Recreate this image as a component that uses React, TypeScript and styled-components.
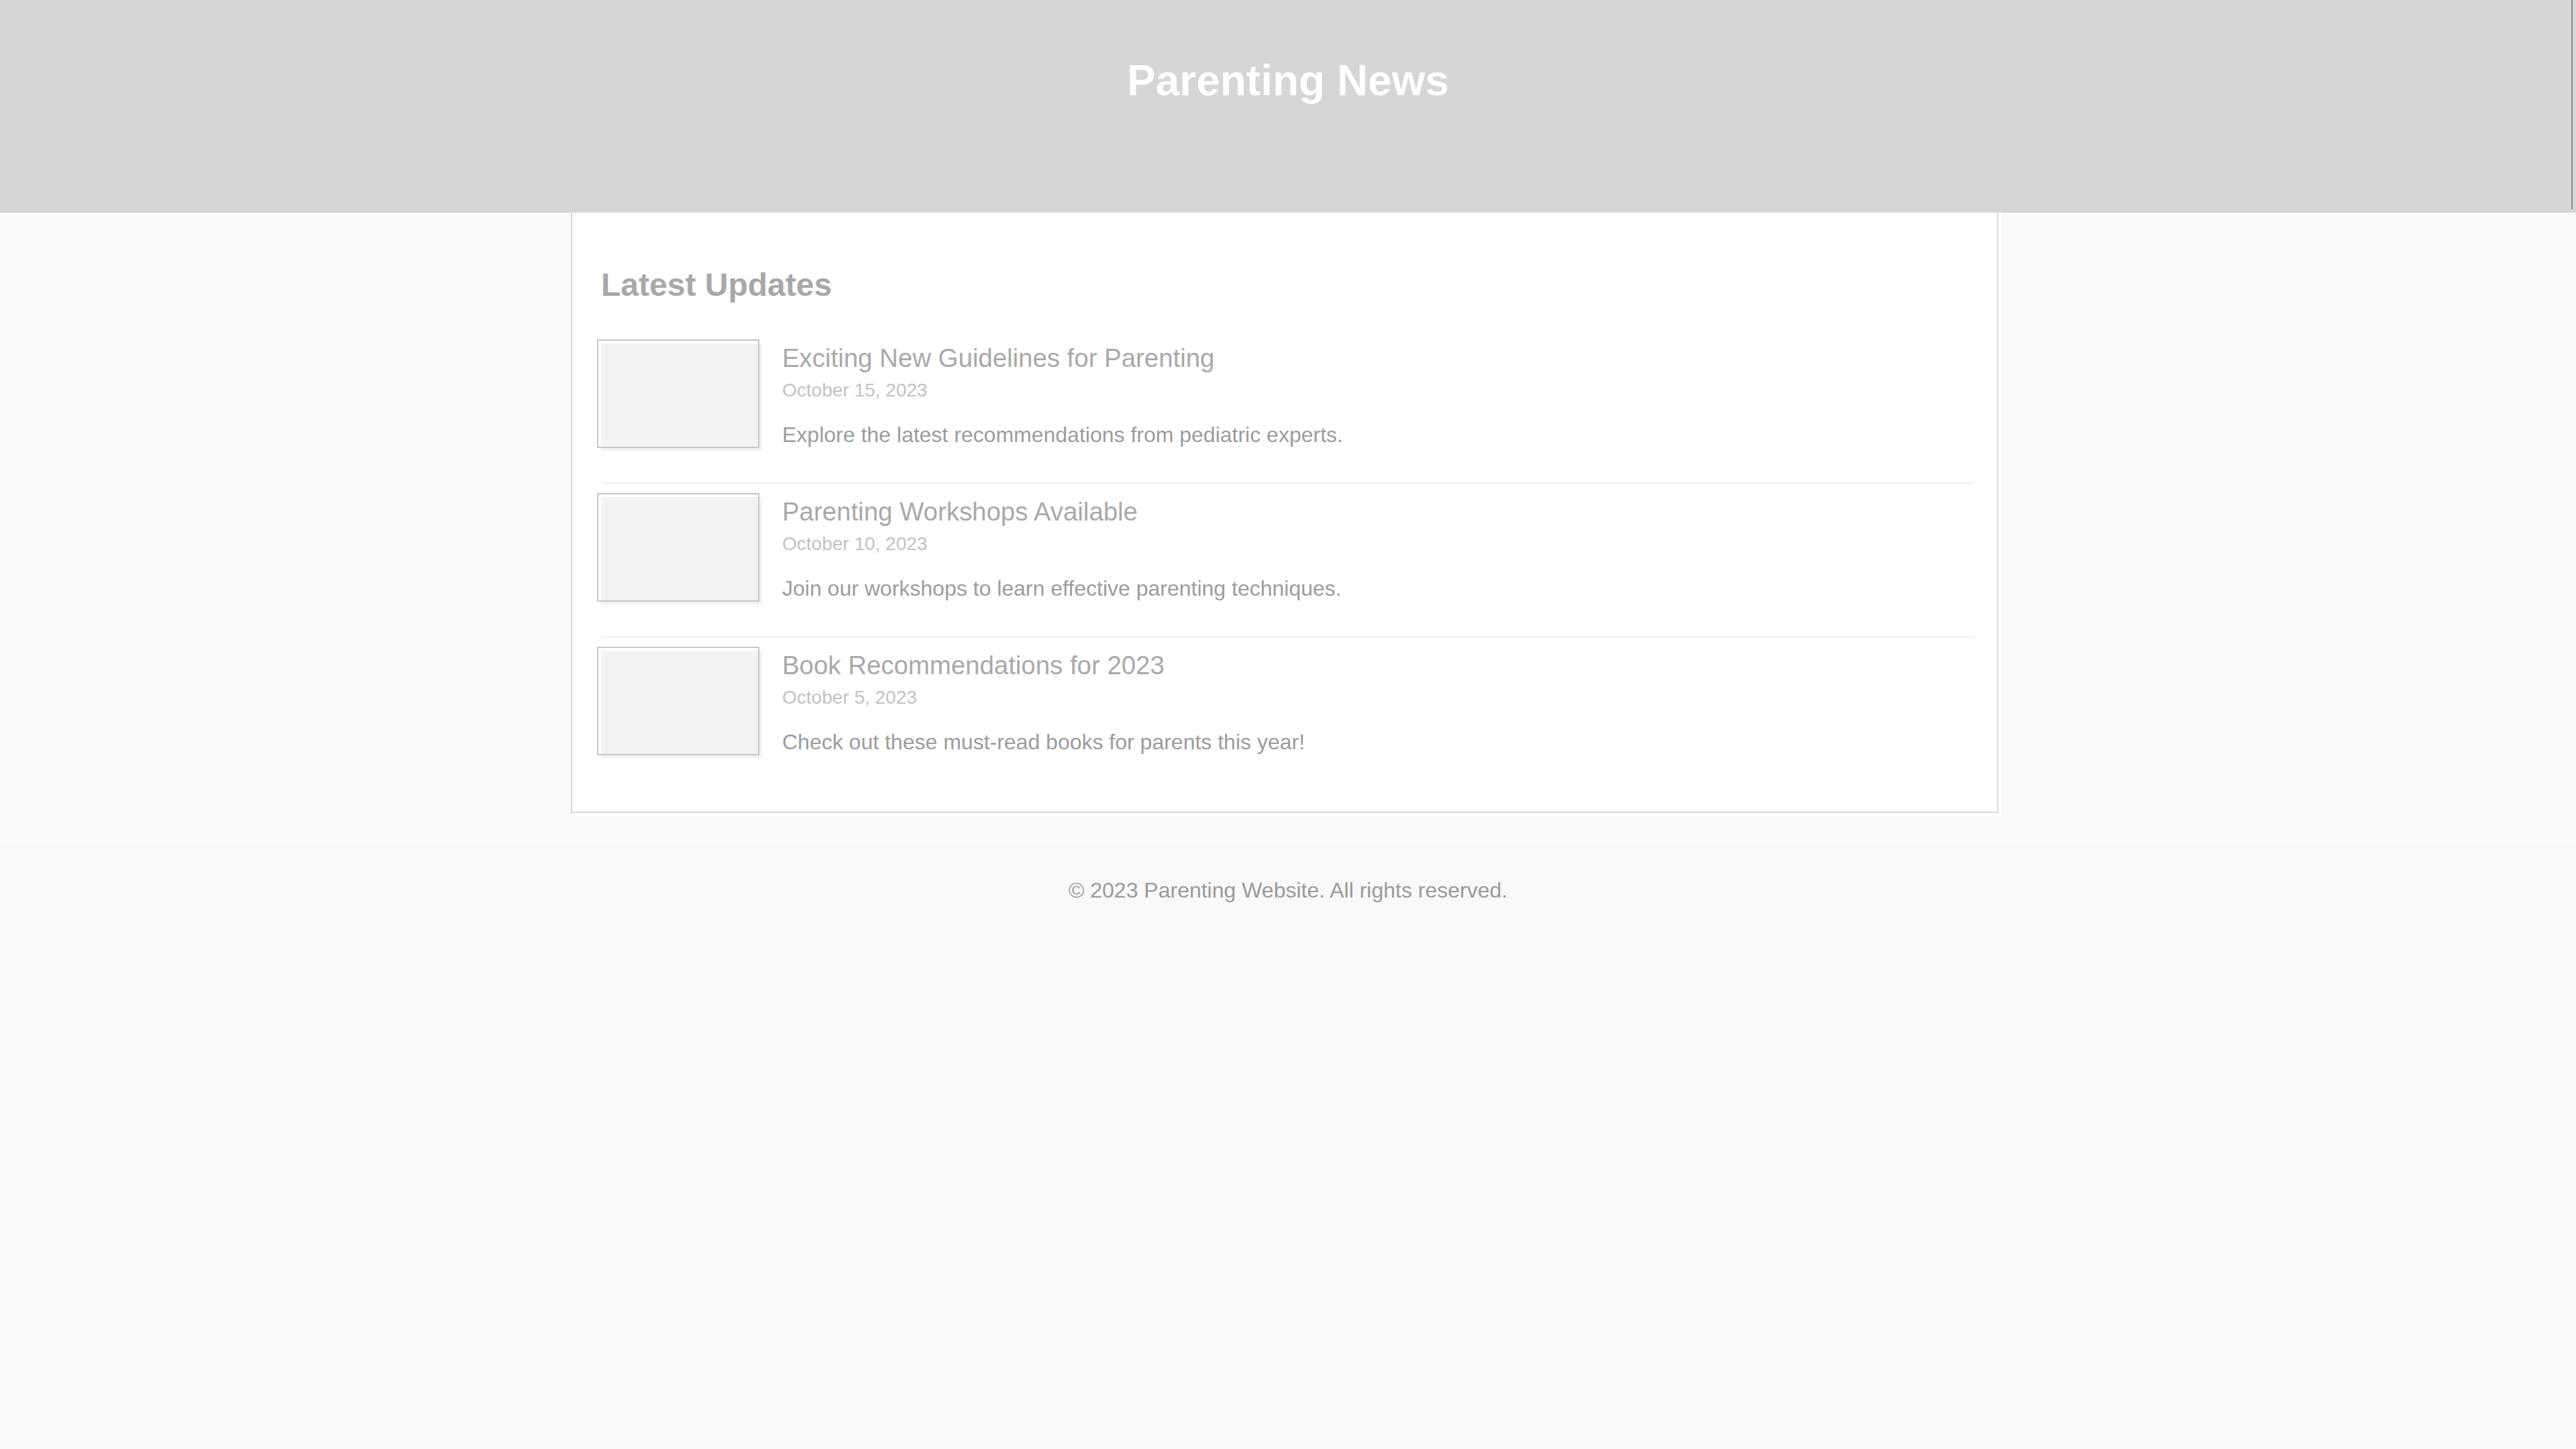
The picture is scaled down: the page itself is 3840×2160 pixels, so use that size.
import React from "react";
import styled, { createGlobalStyle } from "styled-components";

const GlobalStyle = createGlobalStyle`
  html, body {
    margin: 0;
    padding: 0;
    background: #fafafa;
  }
  body {
    font-family: "Liberation Sans", Arial, sans-serif;
  }
`;

const Header = styled.header`
  position: relative;
  box-sizing: border-box;
  height: 317px;
  padding-top: 83px;
  background: #d6d6d6;
  text-align: center;

  &::after {
    content: "";
    position: absolute;
    top: 0;
    right: 5px;
    width: 2px;
    height: 312px;
    background: #8c8c8c;
  }
`;

const SiteTitle = styled.h1`
  margin: 0;
  font-size: 64px;
  font-weight: 700;
  line-height: normal;
  color: #ffffff;
  text-shadow: 0 0 1px rgba(0, 0, 0, 0.12);
`;

const Main = styled.main`
  display: block;
`;

const Panel = styled.section`
  position: relative;
  box-sizing: border-box;
  width: 2128px;
  margin: 0 auto;
  padding: 40px 40px 40px;
  background: #ffffff;

  &::after {
    content: "";
    position: absolute;
    left: -5px;
    top: -5px;
    width: 100%;
    height: 100%;
    box-sizing: border-box;
    border: 2px solid #d9d9d9;
    border-top: none;
    pointer-events: none;
  }
`;

const SectionTitle = styled.h2`
  margin: 40px 0;
  font-size: 48px;
  font-weight: 700;
  line-height: normal;
  color: #a8a8a8;
`;

const List = styled.div`
  display: flex;
  flex-direction: column;
`;

const Item = styled.article`
  display: flex;
  align-items: flex-start;
  gap: 30px;
  padding: 20px 0;
  border-bottom: 2px solid #eeeeee;

  &:last-child {
    border-bottom: none;
  }
`;

const Thumb = styled.div`
  position: relative;
  flex: 0 0 240px;
  height: 160px;
  background: #f3f3f3;

  &::after {
    content: "";
    position: absolute;
    left: -6px;
    top: -6px;
    width: 242px;
    height: 162px;
    box-sizing: border-box;
    border: 2px solid #c6c6c6;
    pointer-events: none;
  }
`;

const ItemBody = styled.div`
  display: flex;
  flex-direction: column;
  min-width: 0;
`;

const ItemTitle = styled.h3`
  margin: 0;
  font-size: 38.4px;
  font-weight: 400;
  line-height: normal;
  color: #a9a9a9;
`;

const ItemDate = styled.div`
  margin-top: 10px;
  font-size: 28px;
  line-height: normal;
  color: #c2c2c2;
`;

const ItemText = styled.p`
  margin: 32px 0;
  font-size: 32px;
  line-height: normal;
  color: #9c9c9c;
`;

const Footer = styled.footer`
  margin-top: 40px;
  padding: 20px;
  background: #f9f9f9;
  text-align: center;
`;

const FooterText = styled.p`
  margin: 32px 0;
  font-size: 32px;
  line-height: normal;
  color: #9a9a9a;
`;

const updates = [
  {
    title: "Exciting New Guidelines for Parenting",
    date: "October 15, 2023",
    text: "Explore the latest recommendations from pediatric experts.",
  },
  {
    title: "Parenting Workshops Available",
    date: "October 10, 2023",
    text: "Join our workshops to learn effective parenting techniques.",
  },
  {
    title: "Book Recommendations for 2023",
    date: "October 5, 2023",
    text: "Check out these must-read books for parents this year!",
  },
];

export default function App() {
  return (
    <>
      <GlobalStyle />
      <Header>
        <SiteTitle>Parenting News</SiteTitle>
      </Header>
      <Main>
        <Panel>
          <SectionTitle>Latest Updates</SectionTitle>
          <List>
            {updates.map((u) => (
              <Item key={u.title}>
                <Thumb />
                <ItemBody>
                  <ItemTitle>{u.title}</ItemTitle>
                  <ItemDate>{u.date}</ItemDate>
                  <ItemText>{u.text}</ItemText>
                </ItemBody>
              </Item>
            ))}
          </List>
        </Panel>
      </Main>
      <Footer>
        <FooterText>© 2023 Parenting Website. All rights reserved.</FooterText>
      </Footer>
    </>
  );
}
